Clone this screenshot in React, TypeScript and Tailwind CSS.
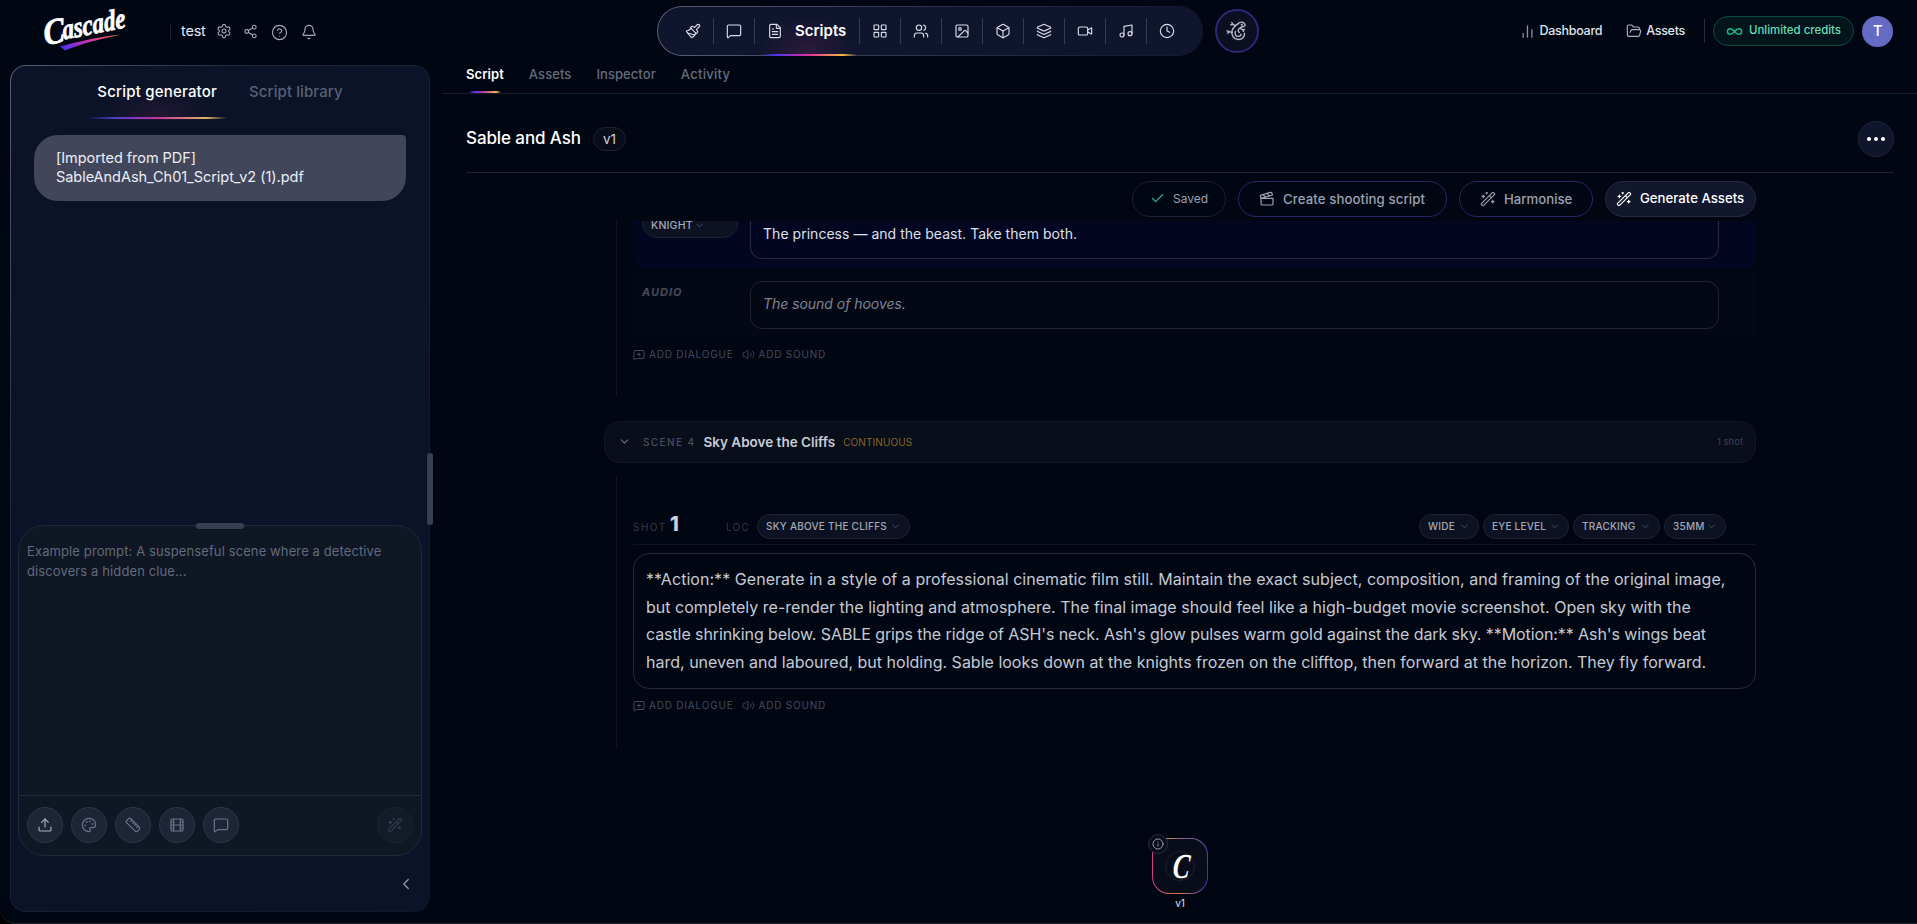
import type { ReactNode } from "react";
import { clsx } from "clsx";
import {
  Bell,
  Box,
  ChartNoAxesColumn,
  Check,
  ChevronDown,
  ChevronLeft,
  Clapperboard,
  Clock,
  FileText,
  Film,
  FolderOpen,
  HelpCircle,
  Image,
  Infinity as InfinityIcon,
  Info,
  Layers,
  LayoutGrid,
  Music,
  Paintbrush,
  Palette,
  Ruler,
  Settings,
  Share2,
  Upload,
  Users,
  Video,
  Volume2,
  WandSparkles,
} from "lucide-react";

// ICONS ***********************************************************************************************************************************
function IconMessage({ size = 17, plus = false, strokeWidth = 1.6, className }: IconMessageProps) {
  return (
    <svg
      width={size}
      height={size}
      viewBox="0 0 24 24"
      fill="none"
      stroke="currentColor"
      strokeWidth={strokeWidth}
      strokeLinecap="round"
      strokeLinejoin="round"
      className={className}
    >
      <path d="M22 17a2 2 0 0 1-2 2H6.8l-3 2.6A1 1 0 0 1 2 21V5a2 2 0 0 1 2-2h16a2 2 0 0 1 2 2z" />
      {plus && <path d="M12 8v6M9 11h6" />}
    </svg>
  );
}

function IconGecko() {
  return (
    <svg width="22" height="22" viewBox="0 0 22 22" fill="none" stroke="#b4bacb" strokeWidth="1.4" strokeLinecap="round" strokeLinejoin="round">
      <path d="M12.2 3.6c1.600-1.600 4.300-1.800 5.900-.4 1.400 1.300 1.300 3-.6 3.300-1.900.3-3 .8-4.300 2-1.600 1.700-1.400 2.800.1 3.900" />
      <path d="M12.200 3.600C9.600 5.500 6.900 7.300 6.100 10.600c-1.100 4.600 1.700 8.700 5.900 8.900 4 .2 6.900-2.900 6.500-6.300" />
      <path d="M9.300 11.500c-.9 2.700.6 5.100 3.200 4.900 1.500-.1 2.500-1.100 2.500-2.300" />
      <path d="M9.300 5.600 6.900 4.400M6.900 4.400 5.800 2.600M6.900 4.400 4.900 4.800M6 12.500l-2.800-.9M3.200 11.600 1 10.800M3.200 11.600l-1.400 1.700M14.500 8.500l2.200 1.400 1.800-.4M16.700 9.900l.8 1.500" />
      <circle cx="15.800" cy="4.700" r=".4" fill="#b4bacb" />
    </svg>
  );
}

function Logo() {
  return (
    <svg width="92" height="48" viewBox="0 0 92 48" className="ml-[42px] shrink-0 overflow-visible" aria-label="Cascade">
      <defs>
        <linearGradient id="swoosh" x1="0" x2="1">
          <stop offset="0" stopColor="#3b33f5" />
          <stop offset=".4" stopColor="#c02fb4" />
          <stop offset=".7" stopColor="#ee4b78" />
          <stop offset="1" stopColor="#f9a13c" />
        </linearGradient>
      </defs>
      <path d="M18 39.500C36 34.500 56 30 79 27.500 58 32 40 36.500 23 43.500z" fill="url(#swoosh)" />
      <g transform="translate(4 38) rotate(-11) skewX(-4)" fill="#fff" stroke="#fff" strokeWidth=".8" fontStyle="italic" fontWeight="700" fontFamily="Liberation Serif, serif">
        <text x="-1" y="0" fontSize="36" textLength="21" lengthAdjust="spacingAndGlyphs">
          C
        </text>
        <text x="18" y="-2" fontSize="29" textLength="64" lengthAdjust="spacingAndGlyphs">
          ascade
        </text>
      </g>
    </svg>
  );
}

// HEADER **********************************************************************************************************************************
const navs = [
  { id: "brush", Icon: Paintbrush },
  { id: "chat", Icon: IconMessage },
  { id: "scripts", Icon: FileText, text: "Scripts" },
  { id: "boards", Icon: LayoutGrid },
  { id: "cast", Icon: Users },
  { id: "images", Icon: Image },
  { id: "props", Icon: Box },
  { id: "layers", Icon: Layers },
  { id: "video", Icon: Video },
  { id: "music", Icon: Music },
  { id: "history", Icon: Clock },
];

function TheHeader() {
  return (
    <header className="flex h-16 shrink-0 items-start">
      <div className="flex h-[62px] w-[657px] items-center">
        <Logo />
        <span className="ml-9 h-4 w-px bg-[#1d2434]" />
        <span className="ml-[10px] text-[14.5px] tracking-[-0.2px] text-[#e6e9f2]">test</span>
        <div className="ml-[10px] flex items-center gap-[11px] text-[#a4aabb]">
          <Settings size={16} strokeWidth={1.7} />
          <Share2 size={15} strokeWidth={1.7} />
          <HelpCircle size={17} strokeWidth={1.6} className="relative left-0.5 top-px" />
          <Bell size={16} strokeWidth={1.7} className="relative left-1 top-px" />
        </div>
      </div>

      <div className="mt-1.5 h-[50px] w-[546px] rounded-full bg-linear-to-r from-[#596075] via-[#2b3149] to-[#111731] p-px">
        <nav className="flex h-full items-center rounded-full bg-[#0f152d] pl-[15px] text-[#d9deea]">
          {navs.map(({ id, Icon, text }, i) => (
            <div key={id} className="flex h-full items-center">
              {i > 0 && <span className="h-[26px] w-px bg-[#343b52]" />}
              {text ? (
                <div className="relative flex h-full w-[104px] items-center gap-3 pl-3">
                  <div className="absolute inset-x-1 bottom-0 top-2 bg-[radial-gradient(ellipse_at_bottom,#47204a88,transparent_70%)]" />
                  <Icon size={16} strokeWidth={1.7} className="relative" />
                  <span className="relative text-[15px] font-semibold text-white">{text}</span>
                  <span className="absolute -bottom-px left-[6px] h-0.5 w-[96px] bg-[linear-gradient(90deg,transparent,#4a32f0_15%,#e2319c_50%,#f9b63f_85%,transparent)]" />
                </div>
              ) : (
                <div className="grid w-10 place-items-center">
                  <Icon size={16} strokeWidth={1.7} />
                </div>
              )}
            </div>
          ))}
        </nav>
      </div>
      <div className="ml-3 mt-[9px] grid size-11 place-items-center rounded-full border-2 border-[#2d2877] bg-[#0a1022]">
        <IconGecko />
      </div>

      <div className="ml-auto mr-6 flex h-[62px] items-center text-[12.5px] font-medium tracking-[-0.28px] text-[#dfe3ec]">
        <ChartNoAxesColumn size={15} strokeWidth={2} className="mr-[5px] text-[#8f96a8]" />
        Dashboard
        <FolderOpen size={16} strokeWidth={1.7} className="ml-6 mr-1 text-[#a9afbf]" />
        Assets
        <span className="ml-[19px] h-6 w-px bg-[#262d3d]" />
        <div className="ml-2 flex h-[30px] w-[141px] items-center gap-[6px] rounded-full border border-[#0d4a42] bg-[#03141a] pl-3 text-[11.5px] tracking-[-0.04px] text-[#6bdcb4]">
          <InfinityIcon size={17} strokeWidth={2} className="text-[#19bd8a]" />
          Unlimited credits
        </div>
        <div className="ml-2 grid size-[31px] place-items-center rounded-full bg-[#636bc4] text-[15px] text-white">T</div>
      </div>
    </header>
  );
}

// SIDEBAR *********************************************************************************************************************************
const tools = [
  { id: "upload", Icon: Upload, className: "text-[#a5adbd]" },
  { id: "palette", Icon: Palette },
  { id: "ruler", Icon: Ruler },
  { id: "film", Icon: Film },
  { id: "chat", Icon: IconMessage },
];

function TheSidebar() {
  return (
    <aside className="relative ml-[10px] mt-px h-[847px] w-[420px] shrink-0 rounded-2xl bg-linear-to-br from-[#596075] via-[#1c2438] via-30% to-[#0e172b] p-px">
      <div className="flex h-full flex-col rounded-[15px] bg-[#0b1328]">
        <div className="flex h-[54px] justify-center gap-8 text-[15px] font-medium tracking-[0.2px]">
          <div className="relative h-full pt-[15px] text-white">
            <div className="absolute inset-x-0 bottom-0 top-5 bg-[radial-gradient(ellipse_at_bottom,#3a1a4088,transparent_70%)]" />
            <span className="relative">Script generator</span>
            <span className="absolute -inset-x-[10px] bottom-px h-0.5 bg-[linear-gradient(90deg,transparent,#4a3fd0_20%,#c2359c_50%,#e0b45f_85%,transparent)]" />
          </div>
          <div className="pt-[15px] tracking-[0.1px] text-[#596174]">Script library</div>
        </div>

        <div className="mx-[23px] mt-[15px] h-[66px] rounded-3xl rounded-tr-[4px] bg-[#42465b] px-[22px] pt-[13px] text-[14.5px] leading-[19px] tracking-[-0.04px] text-[#eceef5]">
          [Imported from PDF]
          <br />
          SableAndAsh_Ch01_Script_v2 (1).pdf
        </div>

        <div className="relative mx-[7px] mt-auto flex h-[331px] flex-col rounded-[26px] border border-[#1f2939] bg-[#0f1624]">
          <div className="absolute -top-[3px] left-[177px] h-1.5 w-12 rounded-full bg-[#374052]" />
          <p className="flex-1 px-2 pt-[15px] text-[13px] leading-5 tracking-[0.11px] text-[#626b7b]">
            Example prompt: A suspenseful scene where a detective
            <br />
            discovers a hidden clue...
          </p>
          <div className="mx-px flex h-[60px] gap-2 border-t border-[#232d3d] px-[7px] pt-[11px]">
            {tools.map(({ id, Icon, className }) => (
              <div key={id} className={clsx("grid size-9 place-items-center rounded-full border border-[#2c3748] bg-[#1c2637]", className ?? "text-[#69748a]")}>
                <Icon size={16} strokeWidth={1.8} />
              </div>
            ))}
            <div className="ml-auto grid size-9 place-items-center rounded-full border border-[#1a2332] bg-[#131b29] text-[#323c4d]">
              <WandSparkles size={16} strokeWidth={1.8} />
            </div>
          </div>
        </div>
        <div className="flex h-[55px] items-center justify-end pr-[14px] pt-px text-[#8f97a8]">
          <ChevronLeft size={18} strokeWidth={1.8} />
        </div>
      </div>
      <div className="absolute -right-[3px] top-[388px] h-[72px] w-1.5 rounded-full bg-[#374052]" />
    </aside>
  );
}

// SCRIPT **********************************************************************************************************************************
const actionLines = [
  { id: 1, className: "tracking-[0.045px]", text: "**Action:** Generate in a style of a professional cinematic film still. Maintain the exact subject, composition, and framing of the original image," },
  { id: 2, className: "tracking-[0.015px]", text: "but completely re-render the lighting and atmosphere. The final image should feel like a high-budget movie screenshot. Open sky with the" },
  { id: 3, className: "tracking-[-0.09px]", text: "castle shrinking below. SABLE grips the ridge of ASH's neck. Ash's glow pulses warm gold against the dark sky. **Motion:** Ash's wings beat" },
  { id: 4, className: "tracking-[0.005px]", text: "hard, uneven and laboured, but holding. Sable looks down at the knights frozen on the clifftop, then forward at the horizon. They fly forward." },
];

function Chip({ className, children }: ChipProps) {
  return (
    <span className={clsx("flex h-[25px] items-center justify-between rounded-full border border-[#1c2332] bg-[#0c1221] pl-2 pr-2 text-[10px] font-medium tracking-[0.23px] text-[#a3a9b8]", className)}>
      {children}
      <ChevronDown size={11} strokeWidth={2} className="text-[#4a5265]" />
    </span>
  );
}

function AddRow() {
  return (
    <div className="flex h-4 items-center text-[10px] tracking-[0.8px] text-[#454b59]">
      <IconMessage plus size={12} strokeWidth={2} className="mr-1" />
      ADD DIALOGUE
      <Volume2 size={13} strokeWidth={1.6} className="ml-[9px] mr-[3px]" />
      ADD SOUND
    </div>
  );
}

function TheScript() {
  return (
    <div className="ml-[162px] h-[703px] w-[1152px] overflow-hidden">
      <section className="ml-3 h-[175px] border-l border-[#0f1624] pl-4">
        <div className="flex h-[47px] items-start rounded-b-xl bg-[#030620] pl-[9px]">
          <div className="-mt-3 flex h-[29px] w-24 items-center justify-between rounded-2xl border border-[#1c2332] bg-[#0c1221] pl-2 pr-8 pt-[5px] text-[10.5px] font-medium tracking-[0.2px] text-[#a3a9b8]">
            KNIGHT
            <ChevronDown size={11} strokeWidth={2} className="text-[#4a5265]" />
          </div>
          <div className="ml-3 h-[38px] w-[969px] rounded-b-xl border border-t-0 border-[#242a3c] pl-3 pt-[3px] text-[14px] leading-5 tracking-[0.03px] text-[#dde1ea]">
            The princess — and the beast. Take them both.
          </div>
        </div>
        <div className="mt-1.5 flex h-[64px] items-start bg-[#040815] pl-[9px] pt-[7px]">
          <span className="w-[108px] pt-[3px] text-[11px] font-bold italic tracking-[1px] text-[#444b5b]">AUDIO</span>
          <div className="h-[48px] w-[969px] rounded-xl border border-[#1e2533] pl-3 pt-3 text-[14px] italic leading-5 tracking-[-0.04px] text-[#7c8494]">
            The sound of hooves.
          </div>
        </div>
        <div className="pt-[9px]">
          <AddRow />
        </div>
      </section>

      <div className="mt-[25px] flex h-[42px] items-center rounded-2xl border border-[#111827] bg-[#080e1a] pl-[13px] pr-3">
        <ChevronDown size={13} strokeWidth={2} className="text-[#6b7282]" />
        <span className="ml-3 pt-px text-[10px] font-medium tracking-[1.4px] text-[#474e5d]">SCENE 4</span>
        <span className="ml-2 text-[13.5px] font-semibold text-[#c9cdd7]">Sky Above the Cliffs</span>
        <span className="ml-2 pt-px text-[10px] tracking-[0.1px] text-[#86642a]">CONTINUOUS</span>
        <span className="ml-auto text-[9.5px] text-[#3b4251]">1 shot</span>
      </div>

      <section className="ml-3 mt-[13px] h-[271px] border-l border-[#0f1624] pl-4 pt-[34px]">
        <div className="flex h-[35px] items-center border-b border-[#0d1422]">
          <span className="w-[37px] pt-px text-[10px] tracking-[1.5px] text-[#323847]">SHOT</span>
          <span className="-mt-1.5 w-[56px] text-[20px] font-extrabold leading-none text-[#ccd0dc]">1</span>
          <span className="w-[31px] pt-px text-[10px] tracking-[1.2px] text-[#323847]">LOC</span>
          <Chip className="w-[153px]">SKY ABOVE THE CLIFFS</Chip>
          <div className="ml-auto mr-[30px] flex gap-1">
            <Chip className="w-[60px]">WIDE</Chip>
            <Chip className="w-[86px]">EYE LEVEL</Chip>
            <Chip className="w-[87px]">TRACKING</Chip>
            <Chip className="w-[62px]">35MM</Chip>
          </div>
        </div>
        <p className="mt-2 h-[136px] whitespace-nowrap rounded-2xl border border-[#242a38] pl-3 pt-[12px] text-[16px] leading-[27.7px] text-[#c5cad4]">
          {actionLines.map(({ id, className, text }) => (
            <span key={id} className={clsx("block", className)}>
              {text}
            </span>
          ))}
        </p>
        <div className="pt-[9px]">
          <AddRow />
        </div>
      </section>

      <div className="mt-[91px] flex flex-col items-center">
        <div className="relative size-14 rounded-[17px] bg-[conic-gradient(from_0deg,#8d6a7c,#3b35c8_25%,#4a35b0_35%,#c97a48_50%,#e0407c_65%,#d23a7c_80%,#e89a48_90%,#8d6a7c)] p-px">
          <div className="grid size-full place-items-center rounded-2xl bg-[#080d19]">
            <span className="grid size-[30px] place-items-center rounded-full border border-[#1b2130]">
              <svg width="26" height="30" viewBox="0 0 26 30" className="overflow-visible" aria-label="C">
                <text
                  transform="translate(5 26) skewX(-5)"
                  fontSize="35"
                  fontWeight="700"
                  fontStyle="italic"
                  fontFamily="Liberation Serif, serif"
                  fill="#fff"
                  textLength="17"
                  lengthAdjust="spacingAndGlyphs"
                >
                  C
                </text>
              </svg>
            </span>
          </div>
          <span className="absolute -left-1 -top-1 grid size-5 place-items-center rounded-full border border-[#262d3b] bg-[#0a0f1b] text-[#a1a7b5]">
            <Info size={12} strokeWidth={1.8} />
          </span>
        </div>
        <span className="mt-0.5 text-[10px] leading-[14px] text-[#dfe3ec]">v1</span>
      </div>
    </div>
  );
}

function TheMain() {
  return (
    <main className="ml-3 flex flex-1 flex-col">
      <div className="flex h-[30px] items-start gap-[25px] border-b border-[#161d2a] pl-6 text-[13px] font-medium tracking-[0.07px] text-[#656d7d]">
        <span className="relative h-[29px] pt-px font-semibold text-white">
          Script
          <span className="absolute inset-x-[3px] bottom-0 h-0.5 bg-[linear-gradient(90deg,transparent,#4a32f0_15%,#c2359c_45%,#f9b65f_85%,transparent)]" />
        </span>
        <span className="pt-px">Assets</span>
        <span className="pt-px">Inspector</span>
        <span className="pt-px tracking-[0.3px]">Activity</span>
      </div>
      <div className="ml-6 mr-[23px] flex h-[79px] items-center border-b border-[#1e2532] pt-[12px]">
        <h1 className="text-[17px] font-medium tracking-[-0.1px] text-white">Sable and Ash</h1>
        <span className="ml-[12px] grid h-6 w-[33px] place-items-center rounded-full border border-[#1b2230] bg-[#080d1a] text-[13.5px] text-[#ccd1dc]">v1</span>
        <span className="ml-auto flex size-9 items-center justify-center gap-[3px] rounded-full border border-[#1d253b] bg-[#0f162c]">
          <i className="size-1 rounded-full bg-white" />
          <i className="size-1 rounded-full bg-white" />
          <i className="size-1 rounded-full bg-white" />
        </span>
      </div>
      <div className="ml-[690px] mt-2 flex h-10 items-start text-[13.2px] font-medium text-[#9ba1b0]">
        <span className="flex h-9 w-[94px] items-center gap-2 rounded-full border border-[#1b2330] pl-[17px] text-[12px] font-normal">
          <Check size={15} strokeWidth={2} className="text-[#22b58b]" />
          Saved
        </span>
        <span className="ml-3 flex h-9 w-[209px] items-center gap-2 rounded-full border border-[#222a63] pl-5 pt-px tracking-[0.1px]">
          <Clapperboard size={16} strokeWidth={1.8} />
          Create shooting script
        </span>
        <span className="ml-3 flex h-9 w-[134px] items-center gap-2 rounded-full border border-[#222a63] pl-5 pt-px">
          <WandSparkles size={16} strokeWidth={1.8} />
          Harmonise
        </span>
        <span className="ml-3 flex h-9 w-[151px] items-center gap-2 rounded-full border border-[#242b40] bg-[#11172d] pl-[10px] text-white">
          <WandSparkles size={16} strokeWidth={1.8} />
          Generate Assets
        </span>
      </div>
      <TheScript />
    </main>
  );
}

export default function App() {
  return (
    <div className="h-[924px] w-[1917px] overflow-hidden bg-black font-['Inter',sans-serif]">
      <div className="flex h-full flex-col overflow-hidden rounded-bl-2xl border-b border-[#20242c] bg-[#010613]">
        <TheHeader />
        <div className="flex min-h-0 flex-1">
          <TheSidebar />
          <TheMain />
        </div>
      </div>
    </div>
  );
}

// TYPES ***********************************************************************************************************************************
type IconMessageProps = { size?: number; plus?: boolean; strokeWidth?: number; className?: string };
type ChipProps = { className?: string; children: ReactNode };
